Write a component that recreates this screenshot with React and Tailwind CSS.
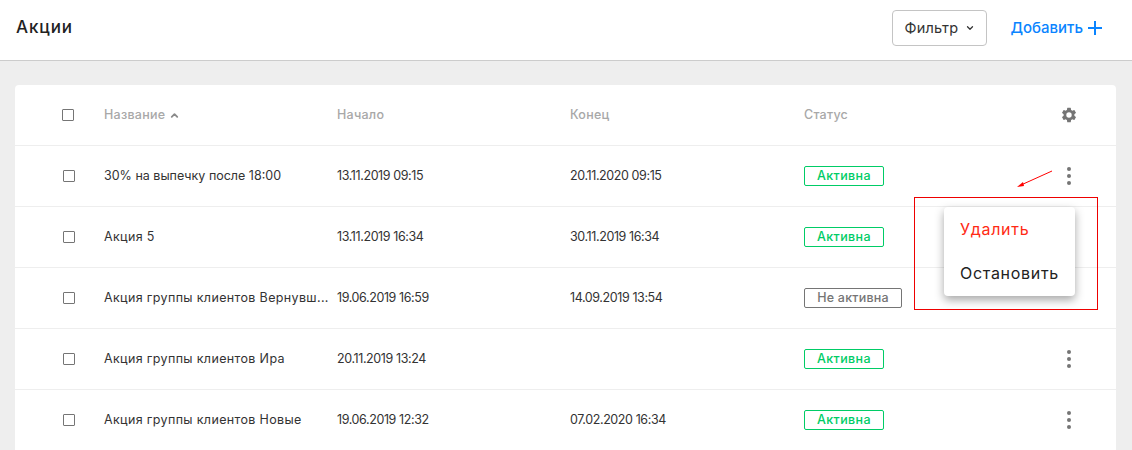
import React from "react";
import { ChevronDown, ChevronUp } from "lucide-react";

const rows = [
  { name: "30% на выпечку после 18:00", spacing: "tracking-[0px]", start: "13.11.2019 09:15", end: "20.11.2020 09:15", active: true, menu: true },
  { name: "Акция 5", spacing: "tracking-[0.35px]", start: "13.11.2019 16:34", end: "30.11.2019 16:34", active: true },
  { name: "Акция группы клиентов Вернувш...", spacing: "tracking-[0.35px]", start: "19.06.2019 16:59", end: "14.09.2019 13:54", active: false },
  { name: "Акция группы клиентов Ира", spacing: "tracking-[0.35px]", start: "20.11.2019 13:24", end: "", active: true, menu: true },
  { name: "Акция группы клиентов Новые", spacing: "tracking-[0.35px]", start: "19.06.2019 12:32", end: "07.02.2020 16:34", active: true, menu: true },
];

const cols = "grid grid-cols-[89px_233px_233px_234px_1fr_94px] items-center";

const Checkbox = ({ className }) => (
  <span className={`block w-[12px] h-[12px] rounded-[1px] border border-[#757575] bg-white ${className}`} />
);

const Dots = () => (
  <div className="flex flex-col items-center gap-[3px]">
    <span className="w-[4px] h-[4px] rounded-full bg-[#757575]" />
    <span className="w-[4px] h-[4px] rounded-full bg-[#757575]" />
    <span className="w-[4px] h-[4px] rounded-full bg-[#757575]" />
  </div>
);

const Gear = () => (
  <svg width="18" height="18" viewBox="0 0 24 24" fill="#757575">
    <path d="M19.14 12.94c.04-.3.06-.61.06-.94s-.02-.64-.07-.94l2.03-1.58a.49.49 0 0 0 .12-.61l-1.92-3.32a.49.49 0 0 0-.59-.22l-2.39.96a7 7 0 0 0-1.62-.94l-.36-2.54a.48.48 0 0 0-.48-.41h-3.84a.48.48 0 0 0-.47.41l-.36 2.54c-.59.24-1.13.57-1.62.94l-2.39-.96a.48.48 0 0 0-.59.22L2.74 8.87a.47.47 0 0 0 .12.61l2.03 1.58c-.05.3-.09.63-.09.94s.02.64.07.94l-2.03 1.58a.49.49 0 0 0-.12.61l1.92 3.32c.12.22.37.29.59.22l2.39-.96c.5.38 1.03.7 1.62.94l.36 2.54c.05.24.24.41.48.41h3.84c.24 0 .44-.17.47-.41l.36-2.54c.59-.24 1.13-.56 1.62-.94l2.39.96c.22.08.47 0 .59-.22l1.92-3.32a.47.47 0 0 0-.12-.61l-2.01-1.58zM12 15.6a3.6 3.6 0 1 1 0-7.2 3.6 3.6 0 0 1 0 7.2z" />
  </svg>
);

const Status = ({ active }) =>
  active ? (
    <span className="inline-block w-[80px] h-[20px] leading-[18px] text-center rounded-[2px] border border-[#00cc66] text-[#00cc66] text-[12.5px] font-medium tracking-[0.4px]">
      Активна
    </span>
  ) : (
    <span className="inline-block w-[98px] h-[20px] leading-[18px] text-center rounded-[2px] border border-[#757575] text-[#757575] text-[12.5px] font-medium tracking-[0.2px]">
      Не активна
    </span>
  );

export default function App() {
  return (
    <div className="relative h-[450px] overflow-hidden bg-[#eeeeee] font-['Inter',sans-serif]">
      {/* Top bar */}
      <header className="h-[61px] flex items-center bg-white border-b border-[#cccccc] pl-[16px] pr-[29px] pb-[4px]">
        <h1 className="text-[17px] font-medium text-[#222222] tracking-[0.9px]">Акции</h1>
        <button className="ml-auto flex items-center h-[36px] w-[95px] pl-[11px] rounded-[4px] border border-[#c4c4c4] bg-white text-[14.5px] tracking-[0.2px] text-[#333333]">
          Фильтр
          <ChevronDown size={10} strokeWidth={3} className="ml-[7px] text-[#333333]" />
        </button>
        <button className="ml-[23px] flex items-center text-[15px] font-medium text-[#0a84ff]">
          Добавить
          <svg width="16" height="16" viewBox="0 0 16 16" fill="none" stroke="currentColor" strokeWidth="2" className="ml-[4px]">
            <path d="M8 1v14M1 8h14" />
          </svg>
        </button>
      </header>

      {/* Table */}
      <div className="mx-[15px] mt-[24px] w-[1101px] rounded-t-[4px] bg-white">
        <div className={`${cols} h-[61px] border-b border-[#eeeeee] text-[12.5px] font-medium text-[#a8a8a8] tracking-[0.25px]`}>
          <Checkbox className="ml-[47px]" />
          <div className="flex items-center gap-[4px]">
            Название
            <ChevronUp size={11} strokeWidth={4} className="text-[#8a8a8a]" />
          </div>
          <div>Начало</div>
          <div>Конец</div>
          <div>Статус</div>
          <div className="flex justify-center">
            <Gear />
          </div>
        </div>
        {rows.map((row) => (
          <div key={row.name} className={`${cols} h-[61px] border-b border-[#eeeeee] text-[12.5px] text-[#333333]`}>
            <Checkbox className="ml-[48px]" />
            <div className={`whitespace-nowrap ${row.spacing}`}>{row.name}</div>
            <div className="tracking-[-0.4px]">{row.start}</div>
            <div className="tracking-[-0.4px]">{row.end}</div>
            <div>
              <Status active={row.active} />
            </div>
            <div className="flex justify-center">{row.menu && <Dots />}</div>
          </div>
        ))}
      </div>

      {/* Annotation: arrow and frame */}
      <svg className="absolute left-[1010px] top-[165px]" width="50" height="26" viewBox="0 0 50 26" fill="none">
        <path d="M42 6 L11 20" stroke="#ff0000" strokeWidth="1" />
        <path d="M7 22 L13 17 L14 21 Z" fill="#ff0000" />
      </svg>
      <div className="absolute left-[914px] top-[197px] w-[184px] h-[113px] border border-[#ee0000]" />

      {/* Row menu */}
      <div className="absolute left-[944px] top-[207px] w-[131px] h-[89px] rounded-[4px] bg-white shadow-[0_4px_10px_rgba(0,0,0,0.35)] pl-[16px] text-[16px] tracking-[0.7px]">
        <div className="h-[44px] flex items-center text-[#ff2a14]">Удалить</div>
        <div className="h-[44px] flex items-center text-[#222222]">Остановить</div>
      </div>
    </div>
  );
}
